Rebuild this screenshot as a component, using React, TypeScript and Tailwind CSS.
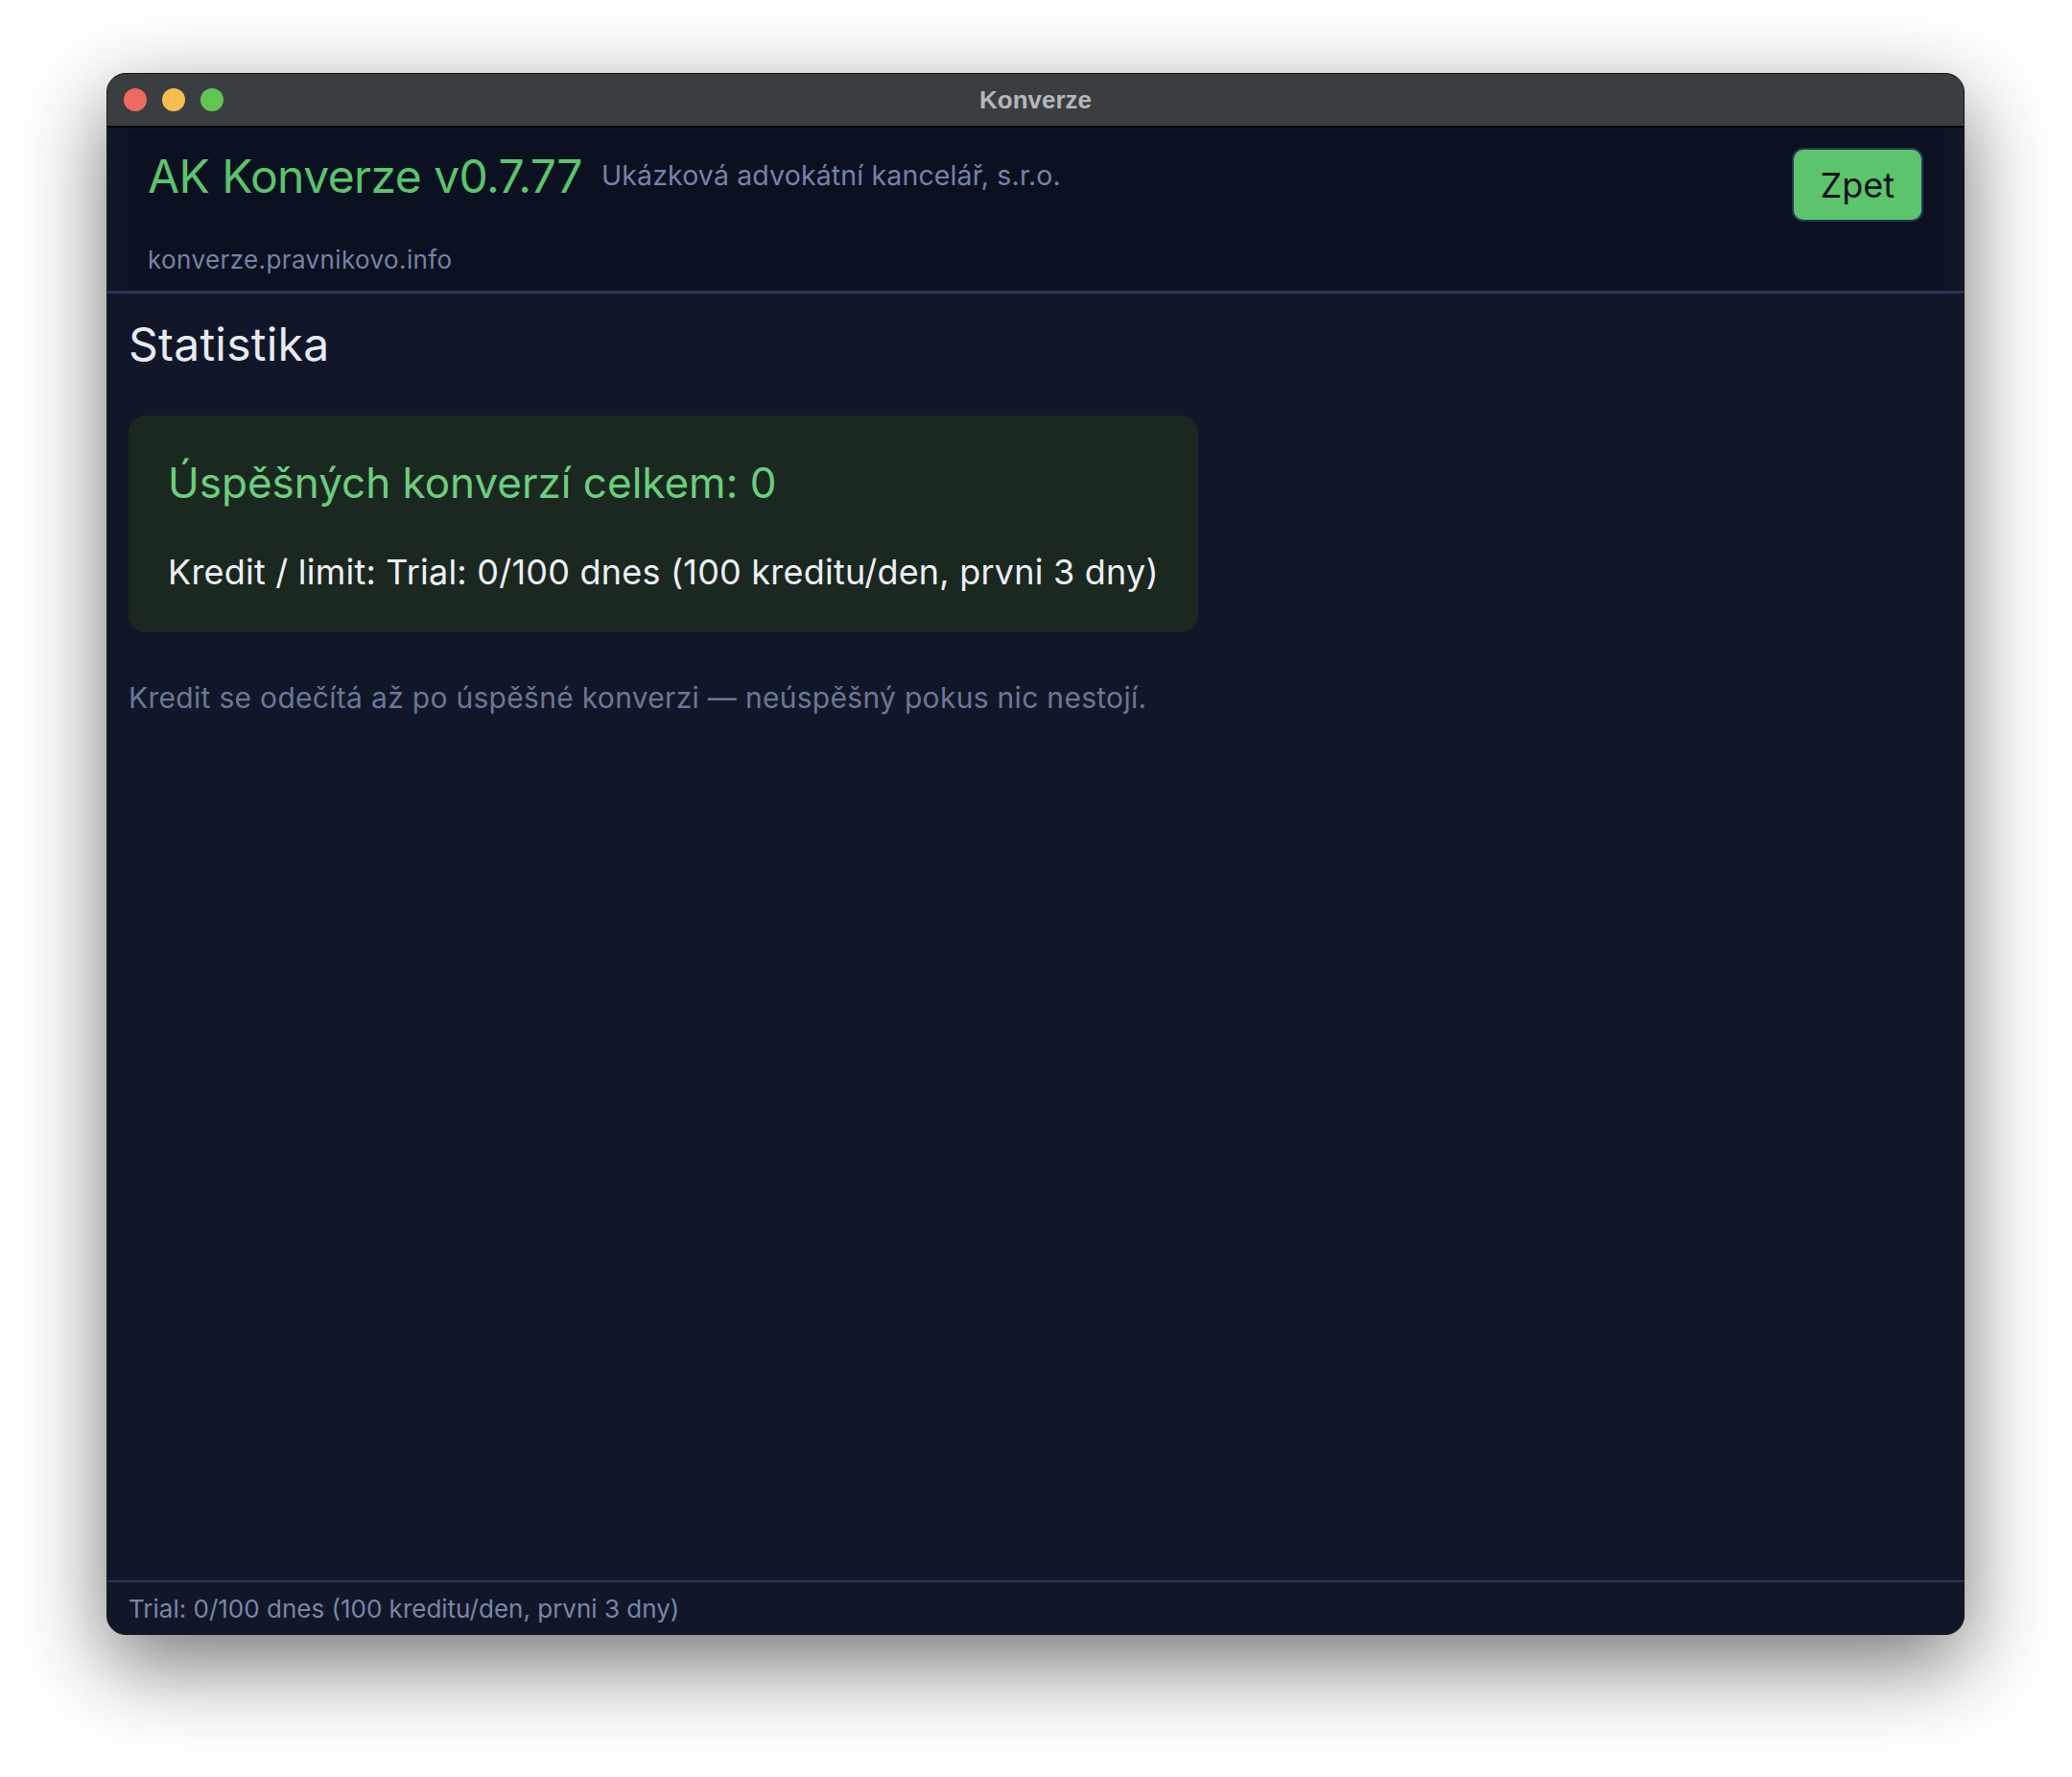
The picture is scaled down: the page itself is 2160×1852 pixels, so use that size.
import React from "react";

export default function App() {
  const font = { fontFamily: "Inter, 'Noto Sans', sans-serif" };
  return (
    <div className="w-[2160px] h-[1852px] bg-white pt-[76px] pl-[111px]" style={font}>
      <div className="w-[1937px] h-[1628px] rounded-[20px] overflow-hidden flex flex-col bg-[#111729] border border-[#1a1a1a] shadow-[0_30px_90px_rgba(0,0,0,0.55)]">
        {/* title bar */}
        <div className="relative h-[56px] shrink-0 bg-[#3b3e40] border-b-2 border-black flex items-center justify-center">
          <div className="absolute left-[17px] top-[15px] flex gap-[16px]">
            <div className="w-[24px] h-[24px] rounded-full bg-[#ec6a5e]" />
            <div className="w-[24px] h-[24px] rounded-full bg-[#f4bf4f]" />
            <div className="w-[24px] h-[24px] rounded-full bg-[#61c554]" />
          </div>
          <span className="text-[26px] font-bold text-[#b4b6b8]" style={{ fontFamily: "'Liberation Sans', Arial, sans-serif" }}>
            Konverze
          </span>
        </div>
        {/* header */}
        <div className="shrink-0 px-[21px] pt-[1px] pb-[1px]">
          <div className="h-[168px] bg-[#0b1120] pl-[21px] pr-[21px] pt-[20px] flex justify-between items-start">
            <div className="flex flex-col">
              <div className="flex items-start gap-[20px]">
                <span className="text-[48px] leading-[1.2] tracking-[-0.012em] text-[#5bc46c] mt-[1px]">AK Konverze v0.7.77</span>
                <span className="text-[28.5px] leading-[1.21] tracking-[0.005em] text-[#7683a6] mt-[12px]">Ukázková advokátní kancelář, s.r.o.</span>
              </div>
              <span className="text-[26px] leading-[1.21] tracking-[0.015em] text-[#7683a6] mt-[42px]">konverze.pravnikovo.info</span>
            </div>
            <button className="h-[77px] px-[28px] rounded-[12px] bg-[#5cc46b] border-2 border-[#27345a] text-[36px] text-[#0b1120] leading-none">
              Zpet
            </button>
          </div>
        </div>
        <div className="h-[3px] shrink-0 bg-[#2b3656]" />
        {/* main */}
        <div className="flex-1 px-[22px] pt-[24px] flex flex-col items-start">
          <h1 className="text-[48px] leading-[1.2] tracking-[0.005em] text-[#e8eaf2]">Statistika</h1>
          <div className="mt-[45px] w-fit rounded-[18px] bg-[#1b2820] px-[41px] pt-[44px] pb-[40px] flex flex-col">
            <span className="text-[44px] leading-[1.2] text-[#6bcf7f]">Úspěšných konverzí celkem: 0</span>
            <span className="text-[36px] leading-[1.2] tracking-[0.006em] text-[#eef0f6] mt-[46px]">
              Kredit / limit: Trial: 0/100 dnes (100 kreditu/den, prvni 3 dny)
            </span>
          </div>
          <p className="mt-[50px] text-[30px] leading-[1.2] tracking-[0.01em] text-[#6b7796]">
            Kredit se odečítá až po úspěšné konverzi — neúspěšný pokus nic nestojí.
          </p>
        </div>
        {/* footer */}
        <div className="h-[2px] shrink-0 bg-[#2b3656]" />
        <div className="h-[54px] shrink-0 px-[22px] flex items-center">
          <span className="text-[26px] text-[#7a86a6]">Trial: 0/100 dnes (100 kreditu/den, prvni 3 dny)</span>
        </div>
      </div>
    </div>
  );
}
